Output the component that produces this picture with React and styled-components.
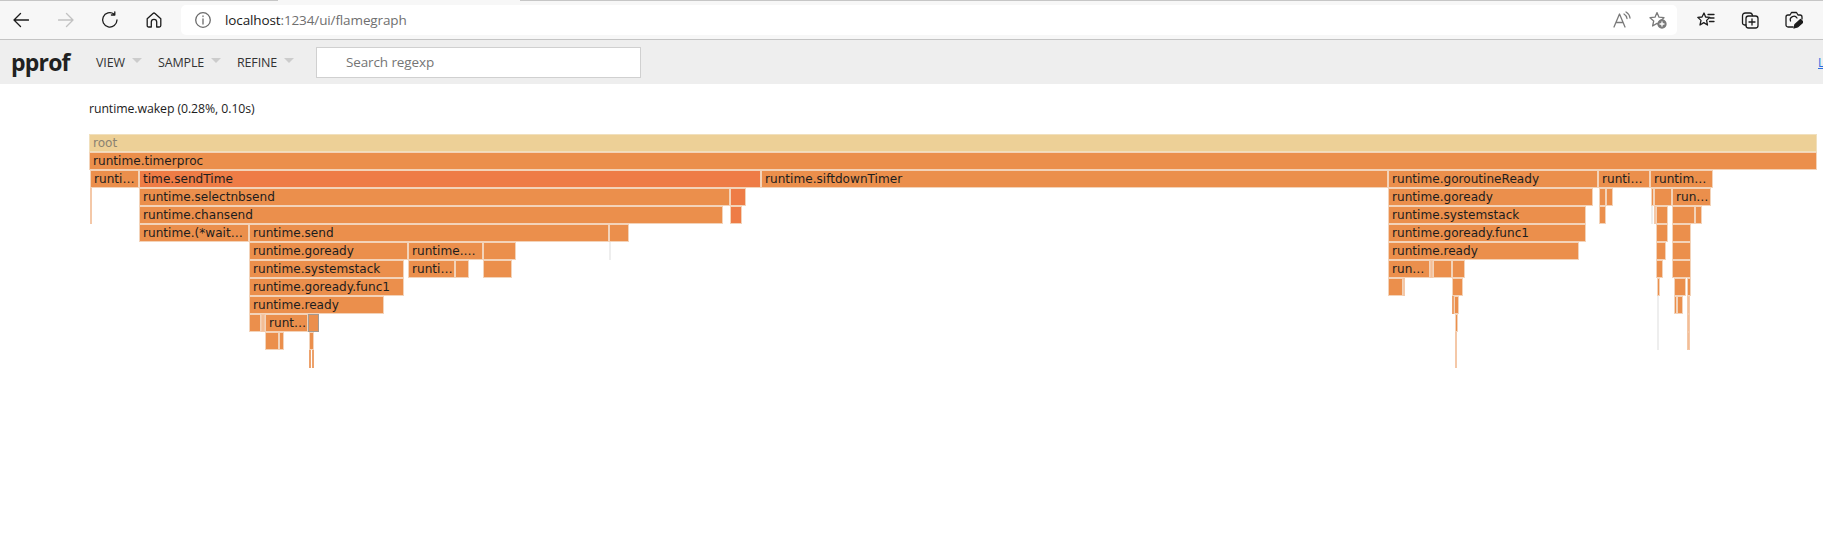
import React from "react";
import styled, { createGlobalStyle } from "styled-components";

const Global = createGlobalStyle`
  html, body { margin: 0; padding: 0; background: #fff; overflow: hidden; }
  #root { width: 1823px; height: 554px; overflow: hidden; }
`;

const Page = styled.div`
  width: 1823px;
  height: 554px;
  display: flex;
  flex-direction: column;
  background: #fff;
  overflow: hidden;
`;

const TabEdge = styled.div`
  height: 1px;
  flex: none;
  background: linear-gradient(to right, #c6c6c6 278px, #f7f7f7 278px, #f7f7f7 520px, #c6c6c6 520px);
`;

const BrowserBar = styled.div`
  height: 38px;
  flex: none;
  display: flex;
  align-items: center;
  background: #f7f7f7;
  border-bottom: 1px solid #c4c4c4;
  padding: 0 0 0 13px;
  box-sizing: content-box;
`;

const NavIcon = styled.svg`
  flex: none;
  width: ${(p) => p.$w}px;
  height: 18px;
  margin-right: ${(p) => p.$mr}px;
  fill: none;
  stroke: ${(p) => p.$c || "#1c1c1c"};
  stroke-width: 1.3;
  stroke-linecap: round;
  stroke-linejoin: round;
`;

const AddressBar = styled.div`
  flex: none;
  width: 1496px;
  height: 30px;
  margin-right: 20px;
  padding: 0 0 0 14px;
  box-sizing: border-box;
  display: flex;
  align-items: center;
  background: #fff;
  border-radius: 5px;
`;

const Url = styled.div`
  flex: 1;
  margin-left: 14px;
  font: 13.5px "Open Sans", sans-serif;
  letter-spacing: -0.12px;
  color: #6f6f6f;
  white-space: nowrap;
  b { font-weight: 400; color: #1a1a1a; }
`;

const PprofHeader = styled.header`
  height: 44px;
  flex: none;
  display: flex;
  align-items: center;
  background: #eee;
  padding-left: 11px;
  position: relative;
`;

const Logo = styled.div`
  width: 85px;
  flex: none;
  font: 700 23px "Open Sans", sans-serif;
  letter-spacing: -0.8px;
  color: #212121;
`;

const Menu = styled.div`
  display: flex;
  align-items: center;
  flex: none;
  width: ${(p) => p.$w}px;
  font: 12.5px "Open Sans", sans-serif;
  letter-spacing: -0.15px;
  color: #333;
`;

const Caret = styled.span`
  width: 0;
  height: 0;
  margin: 0 0 3px 7px;
  border-left: 5px solid transparent;
  border-right: 5px solid transparent;
  border-top: 5px solid #ccc;
`;

const SearchBox = styled.div`
  flex: none;
  width: 325px;
  height: 31px;
  padding-left: 29px;
  box-sizing: border-box;
  display: flex;
  align-items: center;
  background: #fff;
  border: 1px solid #d0d0d0;
  font: 13.5px "Open Sans", sans-serif;
  letter-spacing: -0.12px;
  color: #757575;
`;

const CutLink = styled.a`
  position: absolute;
  left: 1818px;
  top: 14px;
  font: 12px "Open Sans", sans-serif;
  color: #2a6fe0;
  text-decoration: underline;
`;

const Content = styled.main`
  flex: 1;
  padding: 16px 0 0 89px;
  position: relative;
`;

const Detail = styled.div`
  font: 12.3px "Open Sans", sans-serif;
  letter-spacing: -0.08px;
  line-height: 18px;
  color: #1c1c1c;
`;

const Chart = styled.div`
  position: absolute;
  left: 0;
  top: 50px;
  width: 1823px;
  height: 300px;
`;

const tones = {
  root: "#edd097",
  warm: "#eb8f4c",
  hot: "#ee7c46",
  pale: "#f3bd95",
  strip: "#eb8f4c",
  faint: "#eeeeee",
};

const edges = {
  root: "#f1e0bd",
  warm: "#f3d3b9",
  hot: "#f3d3b9",
  pale: "#f4c8a8",
  strip: "#eda26c",
  faint: "#eeeeee",
};

const Frame = styled.div`
  position: absolute;
  box-sizing: border-box;
  height: 18px;
  padding-left: ${(p) => (p.$labelled ? 3 : 0)}px;
  background: ${(p) => tones[p.$tone]};
  border: 1px solid ${(p) => (p.$hover ? "#a39a91" : edges[p.$tone])};
  font: 12.1px/17px "DejaVu Sans", sans-serif;
  color: ${(p) => (p.$tone === "root" ? "#8b8271" : "#1d1d1d")};
  white-space: nowrap;
  overflow: hidden;
`;

const frames = [
  [0, 89, 1817, "root", "root"],
  [1, 89, 1817, "warm", "runtime.timerproc"],
  [2, 90, 139, "warm", "runti…"],
  [2, 139, 761, "hot", "time.sendTime"],
  [2, 761, 1388, "warm", "runtime.siftdownTimer"],
  [2, 1388, 1598, "warm", "runtime.goroutineReady"],
  [2, 1598, 1650, "warm", "runti…"],
  [2, 1650, 1713, "warm", "runtim…"],

  [3, 90, 92, "pale"],
  [3, 139, 730, "warm", "runtime.selectnbsend"],
  [3, 730, 746, "hot"],
  [3, 1388, 1593, "warm", "runtime.goready"],
  [3, 1599, 1606, "warm"],
  [3, 1606, 1613, "warm"],
  [3, 1651, 1654, "warm"],
  [3, 1654, 1672, "warm"],
  [3, 1672, 1711, "warm", "run…"],

  [4, 90, 92, "pale"],
  [4, 139, 723, "warm", "runtime.chansend"],
  [4, 730, 742, "hot"],
  [4, 1388, 1586, "warm", "runtime.systemstack"],
  [4, 1599, 1606, "warm"],
  [4, 1651, 1653, "faint"],
  [4, 1654, 1656, "pale"],
  [4, 1656, 1668, "warm"],
  [4, 1672, 1695, "warm"],
  [4, 1695, 1702, "warm"],

  [5, 139, 249, "warm", "runtime.(*wait…"],
  [5, 249, 609, "warm", "runtime.send"],
  [5, 609, 629, "warm"],
  [5, 1388, 1586, "warm", "runtime.goready.func1"],
  [5, 1656, 1668, "warm"],
  [5, 1672, 1691, "warm"],

  [6, 249, 408, "warm", "runtime.goready"],
  [6, 408, 483, "warm", "runtime.…"],
  [6, 483, 516, "warm"],
  [6, 609, 611, "faint"],
  [6, 1388, 1579, "warm", "runtime.ready"],
  [6, 1656, 1666, "warm"],
  [6, 1672, 1691, "warm"],

  [7, 249, 404, "warm", "runtime.systemstack"],
  [7, 408, 455, "warm", "runti…"],
  [7, 455, 469, "warm"],
  [7, 483, 512, "warm"],
  [7, 1388, 1430, "warm", "run…"],
  [7, 1430, 1433, "pale"],
  [7, 1433, 1452, "warm"],
  [7, 1452, 1465, "warm"],
  [7, 1656, 1663, "warm"],
  [7, 1672, 1691, "warm"],

  [8, 249, 404, "warm", "runtime.goready.func1"],
  [8, 1388, 1403, "warm"],
  [8, 1403, 1405, "pale"],
  [8, 1452, 1463, "warm"],
  [8, 1657, 1660, "warm"],
  [8, 1674, 1686, "warm"],
  [8, 1687, 1691, "warm"],

  [9, 249, 384, "warm", "runtime.ready"],
  [9, 1452, 1454, "strip"],
  [9, 1454, 1459, "warm"],
  [9, 1657, 1659, "faint"],
  [9, 1674, 1677, "warm"],
  [9, 1677, 1683, "warm"],
  [9, 1687, 1690, "pale"],

  [10, 249, 261, "warm"],
  [10, 261, 265, "pale"],
  [10, 265, 308, "warm", "runt…"],
  [10, 308, 319, "warm", null, true],
  [10, 1455, 1458, "warm"],
  [10, 1657, 1659, "faint"],
  [10, 1687, 1690, "pale"],

  [11, 265, 279, "warm"],
  [11, 279, 284, "warm"],
  [11, 309, 314, "warm"],
  [11, 1455, 1457, "pale"],
  [11, 1657, 1659, "faint"],
  [11, 1687, 1690, "pale"],

  [12, 309, 311, "strip"],
  [12, 312, 314, "strip"],
  [12, 1455, 1457, "pale"],
];

const LightIcon = styled.svg`
  flex: none;
  fill: none;
  stroke: ${(p) => p.$c || "#1c1c1c"};
  stroke-width: 1.3;
  stroke-linejoin: round;
  stroke-linecap: round;
  margin-right: ${(p) => p.$mr || 0}px;
  width: 18px;
  height: 18px;
`;

const star = "M8 1.6 L10 6.2 L15 6.7 L11.3 10 L12.4 15 L8 12.4 L3.6 15 L4.7 10 L1 6.7 L6 6.2 Z";

export default function App() {
  return (
    <Page>
      <Global />
      <TabEdge />
      <BrowserBar>
        <NavIcon $w={16} $mr={29} viewBox="0 0 16 18">
          <path d="M15.5 9 H1 M7.5 2.5 L1 9 L7.5 15.5" />
        </NavIcon>
        <NavIcon $w={16} $mr={27} $c="#c2c2c2" viewBox="0 0 16 18">
          <path d="M.5 9 H15 M8.5 2.5 L15 9 L8.5 15.5" />
        </NavIcon>
        <NavIcon $w={18} $mr={27} viewBox="0 0 18 18">
          <path d="M16 9 A7.2 7.2 0 1 1 13 3 M13.8 .8 V4 H10.4" />
        </NavIcon>
        <NavIcon $w={16} $mr={19} viewBox="0 0 16 18">
          <path d="M1.2 7.8 L7 2.4 Q8 1.6 9 2.4 L14.8 7.8 V14.5 Q14.8 16 13.3 16 H10.7 V11 A2.7 2.7 0 0 0 5.3 11 V16 H2.7 Q1.2 16 1.2 14.5 Z" />
        </NavIcon>
        <AddressBar>
          <NavIcon $w={16} $mr={0} $c="#6b6b6b" viewBox="0 0 16 18">
            <circle cx="8" cy="9" r="7.3" />
            <path d="M8 8 V13 M8 5 V5.6" />
          </NavIcon>
          <Url><b>localhost</b>:1234/ui/flamegraph</Url>
          <LightIcon $mr={18} $c="#7a7a7a" viewBox="0 0 18 18">
            <path d="M1 16 L6.5 3 L12 16 M3 11.5 H10 M11 3 Q13.5 4.5 14 7.5 M13 1 Q16.5 3 17 7" />
          </LightIcon>
          <LightIcon $mr={10} $c="#7a7a7a" viewBox="0 0 18 18">
            <path d={star} />
            <circle cx="13" cy="13" r="4" fill="#7a7a7a" />
            <path d="M13 11 V15 M11 13 H15" stroke="#fff" />
          </LightIcon>
        </AddressBar>
        <LightIcon $mr={26} viewBox="0 0 18 18">
          <path d="M7 2 L8.6 6 L12.8 6.4 L9.6 9.4 L10.5 14 L6.8 11.6 L3 14 L4 9.4 L.8 6.4 L5 6 Z M11 3.5 H17 M13 7 H17 M12.5 10.5 H17" />
        </LightIcon>
        <LightIcon $mr={26} viewBox="0 0 18 18">
          <path d="M5 14 H3.5 A2 2 0 0 1 1.5 12 V5 Q1.5 2 4.5 2 H9 Q11 2 11.5 4.5" />
          <rect x="5" y="5" width="12" height="12" rx="2.5" />
          <path d="M11 8 V14 M8 11 H14" />
        </LightIcon>
        <LightIcon viewBox="0 0 18 18">
          <path d="M8 16 H3 A2 2 0 0 1 1 14 V6 A2 2 0 0 1 3 4 H5 L6.5 1.5 H11.5 L13 4 H15 A2 2 0 0 1 17 6 V8" />
          <path d="M5.5 10 A3.6 3.6 0 0 1 12 7" />
          <path d="M9 17 L10 13.5 L15.5 8.5 L18 11 L12.5 16 Z" fill="#1c1c1c" />
        </LightIcon>
      </BrowserBar>
      <PprofHeader>
        <Logo>pprof</Logo>
        <Menu $w={62}>VIEW<Caret /></Menu>
        <Menu $w={79}>SAMPLE<Caret /></Menu>
        <Menu $w={79}>REFINE<Caret /></Menu>
        <SearchBox>Search regexp</SearchBox>
        <CutLink href="#">L</CutLink>
      </PprofHeader>
      <Content>
        <Detail>runtime.wakep (0.28%, 0.10s)</Detail>
        <Chart>
          {frames.map(([level, x0, x1, tone, label, hover], i) => (
            <Frame
              key={i}
              $tone={tone}
              $hover={hover}
              $labelled={Boolean(label)}
              style={{ left: x0, top: level * 18, width: x1 - x0 }}
            >
              {label}
            </Frame>
          ))}
        </Chart>
      </Content>
    </Page>
  );
}
